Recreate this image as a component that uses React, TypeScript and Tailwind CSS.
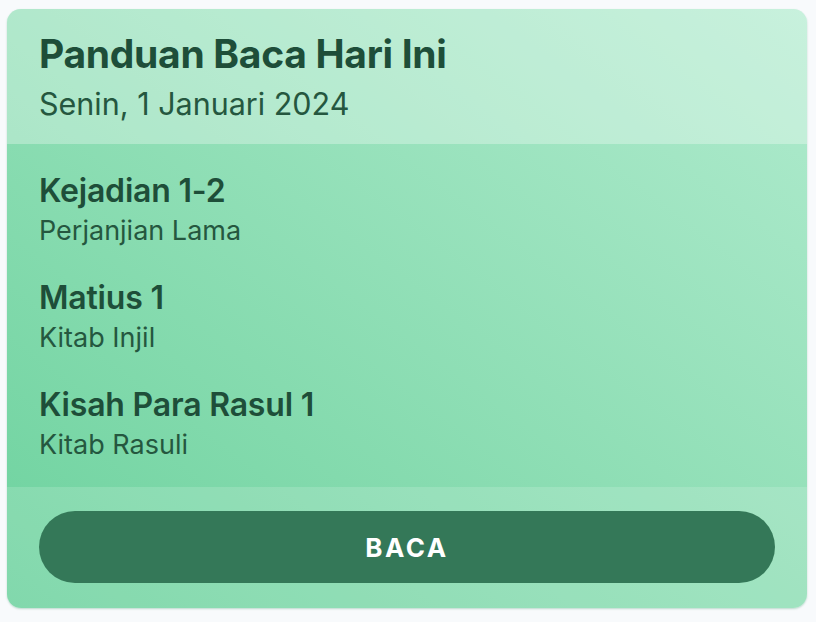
import React from 'react';

interface Reading {
  passage: string;
  book: string;
}

const readings: Reading[] = [
  { passage: 'Kejadian 1-2', book: 'Perjanjian Lama' },
  { passage: 'Matius 1', book: 'Kitab Injil' },
  { passage: 'Kisah Para Rasul 1', book: 'Kitab Rasuli' },
];

const App: React.FC = () => {
  return (
    <div className="min-h-screen bg-[#f8fafc] pt-[9px] pl-[7px] font-['Inter',sans-serif] text-[#1e4e39]">
      <div className="w-[800px] h-[599px] rounded-[14px] overflow-hidden flex flex-col bg-gradient-to-tr from-[#6cd29e] to-[#b0ebce] shadow-[0_1px_2px_rgba(16,120,70,0.25)]">
        {/* Header */}
        <div className="h-[135px] px-8 pt-[22px] bg-white/30">
          <h1 className="text-[39px] font-bold leading-[46px] tracking-[-0.3px]">Panduan Baca Hari Ini</h1>
          <p className="text-[30.5px] leading-[36px] mt-[9px] text-[#25573f]">Senin, 1 Januari 2024</p>
        </div>

        {/* Readings */}
        <div className="h-[343px] px-8 pt-[29px] flex flex-col gap-[33px]">
          {readings.map((r) => (
            <div key={r.passage} className="flex flex-col">
              <div className="text-[32px] font-semibold leading-[36px] tracking-[-0.2px]">{r.passage}</div>
              <div className="text-[27px] leading-[32px] mt-[6px] text-[#25573f]">{r.book}</div>
            </div>
          ))}
        </div>

        {/* Footer */}
        <div className="flex-1 px-8 pt-[24px] bg-white/15">
          <button className="w-full h-[72px] rounded-full bg-[#347858] text-white text-[26px] font-bold tracking-[2.5px]">
            BACA
          </button>
        </div>
      </div>
    </div>
  );
};

export default App;
